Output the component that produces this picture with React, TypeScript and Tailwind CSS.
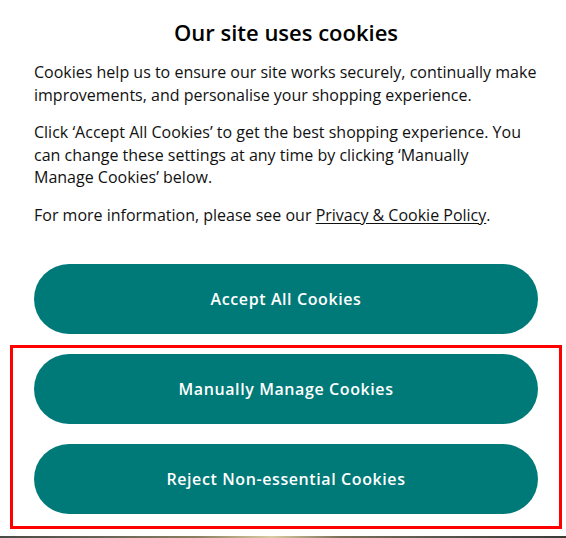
export default function App() {
  const font = { fontFamily: '"Open Sans", "Noto Sans", sans-serif' };
  return (
    <div className="w-[566px] h-[538px] bg-white overflow-hidden flex flex-col" style={font}>
      <div className="pl-[34px] pr-[28px] pt-[17px] flex flex-col">
        <h1 className="text-center text-[22px] leading-[30px] font-semibold text-black">Our site uses cookies</h1>
        <div className="mt-[14px] text-[16px] leading-[22.5px] text-[#111] space-y-[15px]">
          <p>Cookies help us to ensure our site works securely, continually make improvements, and personalise your shopping experience.</p>
          <p>
            Click ‘Accept All Cookies’ to get the best shopping experience. You can change these settings at any time by clicking ‘Manually
            <br />
            Manage Cookies’ below.
          </p>
          <p>
            For more information, please see our{" "}
            <a href="#" className="underline underline-offset-2">Privacy &amp; Cookie Policy</a>.
          </p>
        </div>

        <button className="mt-[38px] h-[70px] w-full rounded-full bg-[#007a78] text-white text-[16px] font-semibold tracking-[0.6px]">
          Accept All Cookies
        </button>

        <div className="mt-[11px] -mx-[24px] border-[3px] border-[#ff0000] px-[21px] pt-[6px] pb-[12px] flex flex-col gap-[20px]">
          <button className="h-[70px] w-full rounded-full bg-[#007a78] text-white text-[16px] font-semibold tracking-[0.6px]">
            Manually Manage Cookies
          </button>
          <button className="h-[70px] w-full rounded-full bg-[#007a78] text-white text-[16px] font-semibold tracking-[0.6px]">
            Reject Non-essential Cookies
          </button>
        </div>
      </div>
      <div className="mt-auto h-[2px] bg-[linear-gradient(90deg,#4a4a44_0%,#6b6656_20%,#8a8060_35%,#d8ccA0_48%,#7a7058_60%,#55524a_80%,#3a3a36_100%)]" />
    </div>
  );
}
